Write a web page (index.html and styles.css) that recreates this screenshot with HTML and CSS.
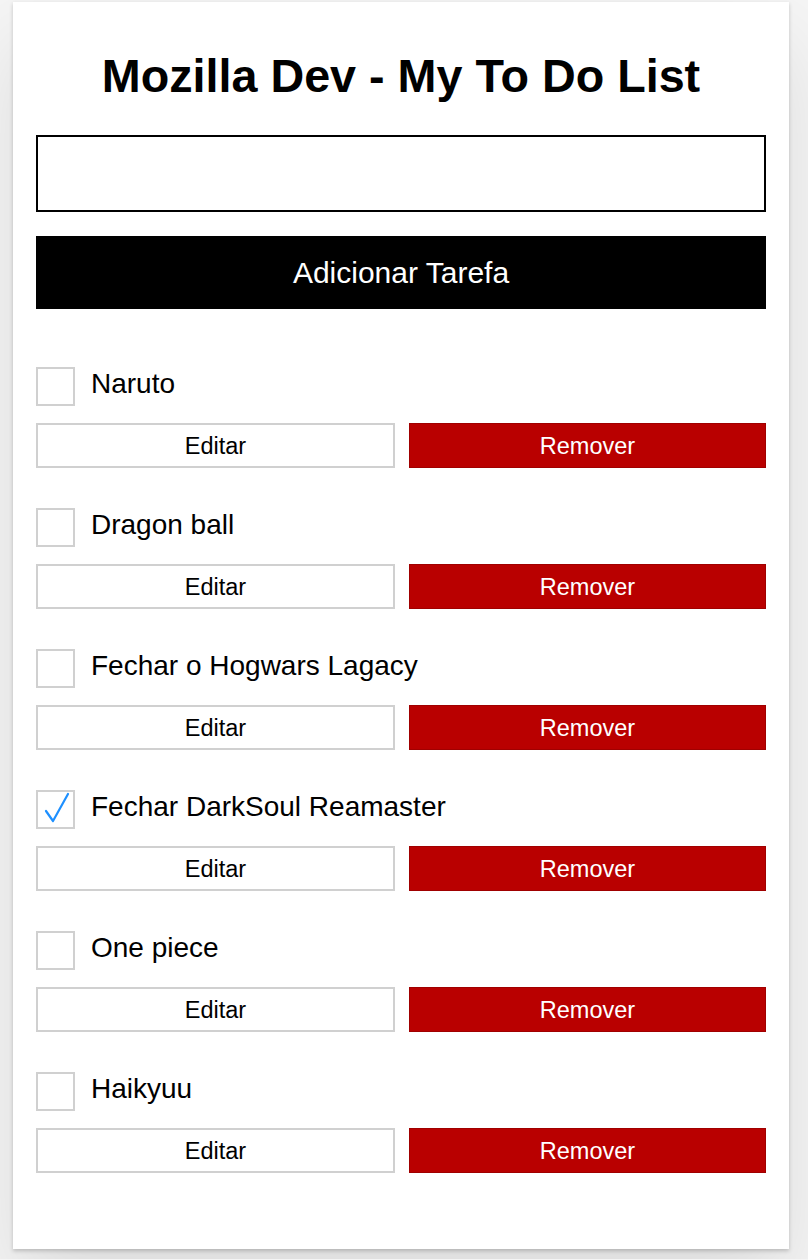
FILE: index.html
```html
<!DOCTYPE html>
<html lang="pt">
<head>
<meta charset="utf-8">
<title>Mozilla Dev - My To Do List</title>
<link rel="stylesheet" href="styles.css">
</head>
<body>
<div class="app">
  <h1 class="title">Mozilla Dev - My To Do List</h1>
  <form class="add">
    <input class="add-input" type="text" aria-label="Tarefa">
    <button class="add-btn" type="button">Adicionar Tarefa</button>
  </form>
  <ul class="list">
    <li class="todo">
      <div class="todo-row"><span class="check"></span><span class="label">Naruto</span></div>
      <div class="todo-actions"><button class="btn" type="button">Editar</button><button class="btn btn-danger" type="button">Remover</button></div>
    </li>
    <li class="todo">
      <div class="todo-row"><span class="check"></span><span class="label">Dragon ball</span></div>
      <div class="todo-actions"><button class="btn" type="button">Editar</button><button class="btn btn-danger" type="button">Remover</button></div>
    </li>
    <li class="todo">
      <div class="todo-row"><span class="check"></span><span class="label">Fechar o Hogwars Lagacy</span></div>
      <div class="todo-actions"><button class="btn" type="button">Editar</button><button class="btn btn-danger" type="button">Remover</button></div>
    </li>
    <li class="todo">
      <div class="todo-row"><span class="check"><svg class="tick" viewBox="0 0 39 39" width="39" height="39"><path d="M10 21 L17 31 L32 4" fill="none" stroke="#1e90ff" stroke-width="2.2" stroke-linecap="round" stroke-linejoin="round"/></svg></span><span class="label">Fechar DarkSoul Reamaster</span></div>
      <div class="todo-actions"><button class="btn" type="button">Editar</button><button class="btn btn-danger" type="button">Remover</button></div>
    </li>
    <li class="todo">
      <div class="todo-row"><span class="check"></span><span class="label">One piece</span></div>
      <div class="todo-actions"><button class="btn" type="button">Editar</button><button class="btn btn-danger" type="button">Remover</button></div>
    </li>
    <li class="todo">
      <div class="todo-row"><span class="check"></span><span class="label">Haikyuu</span></div>
      <div class="todo-actions"><button class="btn" type="button">Editar</button><button class="btn btn-danger" type="button">Remover</button></div>
    </li>
  </ul>
</div>
</body>
</html>
```
FILE: styles.css
```css
* { box-sizing: border-box; }
html, body { margin: 0; padding: 0; }
body {
  background: #f5f5f5;
  font-family: "Liberation Sans", Arial, sans-serif;
  color: #000;
}
.app {
  width: 776px;
  margin: 2px 0 10px 13px;
  background: #fff;
  padding: 23px 23px 76px;
  box-shadow: 0 2px 4px 0 rgba(0,0,0,.2), 0 2.5rem 5rem 0 rgba(0,0,0,.1);
}
.title {
  margin: 23px 0 31px;
  font-size: 46.7px;
  line-height: 56px;
  font-weight: 700;
  text-align: center;
}
.add { display: flex; flex-direction: column; gap: 24px; margin: 0; }
.add-input {
  display: block;
  width: 100%;
  height: 77px;
  border: 2px solid #000;
  border-radius: 0;
  margin: 0;
  padding: 0 12px;
  font: 24px "Liberation Sans", Arial, sans-serif;
  background: #fff;
}
.add-btn {
  height: 73px;
  width: 100%;
  border: 0;
  background: #000;
  color: #fff;
  font: 30px "Liberation Sans", Arial, sans-serif;
  margin: 0;
  padding: 0;
}
.list {
  list-style: none;
  margin: 58px 0 0;
  padding: 0;
  display: flex;
  flex-direction: column;
  gap: 40px;
}
.todo { display: flex; flex-direction: column; gap: 17px; }
.todo-row { display: flex; align-items: center; height: 39px; }
.check {
  width: 39px;
  height: 39px;
  border: 2px solid #d0d0d0;
  flex: none;
  position: relative;
}
.tick { position: absolute; left: -2px; top: -2px; }
.label {
  margin-left: 16px;
  font-size: 28px;
  line-height: 30px;
  margin-top: -6px;
}
.todo-actions { display: flex; gap: 14px; }
.btn {
  flex: 1;
  height: 45px;
  margin: 0;
  padding: 2px 0 0;
  background: #fff;
  border: 2px solid #d0d0d0;
  color: #000;
  font: 23.5px "Liberation Sans", Arial, sans-serif;
}
.btn-danger {
  background: #b90000;
  border: 1px solid #a00000;
  color: #fff;
}
```
